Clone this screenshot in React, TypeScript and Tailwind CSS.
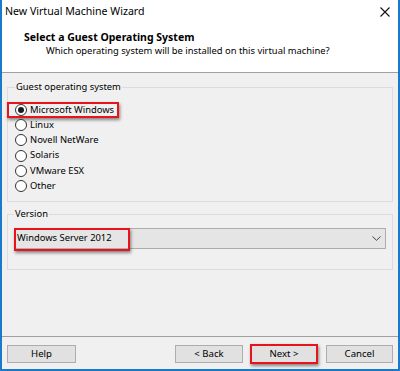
const osOptions = ['Microsoft Windows', 'Linux', 'Novell NetWare', 'Solaris', 'VMware ESX', 'Other'];

function Radio({ checked }: { checked: boolean }) {
    return (
        <span className="w-[12px] h-[12px] rounded-full border border-[#333333] bg-white flex items-center justify-center shrink-0">
            {checked && <span className="w-[6px] h-[6px] rounded-full bg-[#1a1a1a]"></span>}
        </span>
    );
}

function Highlight({ className }: { className: string }) {
    return (
        <span
            className={
                'absolute border-2 border-[#e8141c] shadow-[1px_2px_3px_rgba(0,0,0,0.45)] pointer-events-none ' +
                className
            }
        ></span>
    );
}

export default function App() {
    return (
        <div className="w-[400px] h-[371px] bg-[#f0f0f0] border-x-2 border-b-2 border-[#1979ca] flex flex-col font-['Noto_Sans',sans-serif] text-[9.4px] text-black overflow-hidden">
            {/* header */}
            <div className="h-[73px] bg-white border-b border-[#a0a0a0] shrink-0">
                <div className="h-[24px] flex items-center justify-between pl-[3px] pr-[8px]">
                    <span className="text-[10.6px]">New Virtual Machine Wizard</span>
                    <svg width="10" height="10" viewBox="0 0 10 10">
                        <path d="M0.5 0.5L9.5 9.5M9.5 0.5L0.5 9.5" stroke="#111" strokeWidth="1.1" />
                    </svg>
                </div>
                <div className="pl-[22px] pt-[6px] font-bold text-[10.5px] leading-[14px]">Select a Guest Operating System</div>
                <div className="pl-[44px] leading-[13px]">Which operating system will be installed on this virtual machine?</div>
            </div>

            <div className="flex-1 flex flex-col px-[5px]">
                <fieldset className="mt-[7px] h-[122px] border border-[#dcdcdc] px-[7px]">
                    <legend className="px-[1px] leading-[14px]">Guest operating system</legend>
                    <div className="pt-[8px] flex flex-col">
                        {osOptions.map((name, i) => (
                            <div key={name} className="relative h-[15.3px] flex items-center gap-[3px]">
                                <Radio checked={i === 0} />
                                <span>{name}</span>
                                {i === 0 && <Highlight className="-left-[8px] -top-[0.5px] w-[112px] h-[16px]" />}
                            </div>
                        ))}
                    </div>
                </fieldset>

                <fieldset className="mt-[5px] h-[63px] border border-[#dcdcdc] px-[6px]">
                    <legend className="px-[1px] leading-[14px]">Version</legend>
                    <div className="pt-[7px]">
                        <div className="relative h-[21px] bg-[#e5e5e5] border border-[#adadad] flex items-center justify-between pl-[2px] pr-[4px]">
                            <span>Windows Server 2012</span>
                            <svg width="9" height="5" viewBox="0 0 9 5">
                                <path d="M0.5 0.5L4.5 4.3L8.5 0.5" fill="none" stroke="#444" strokeWidth="1" />
                            </svg>
                            <Highlight className="-left-[1px] -top-[1px] w-[116px] h-[23px]" />
                        </div>
                    </div>
                </fieldset>

                <div className="flex-1"></div>
            </div>

            <div className="h-[33px] shrink-0 border-t border-[#a0a0a0] flex items-center px-[5px] pt-[2px]">
                <button className="w-[69px] h-[18px] bg-[#e1e1e1] border border-[#adadad] text-[9.6px] leading-none">Help</button>
                <div className="flex-1"></div>
                <button className="w-[68px] h-[18px] bg-[#e1e1e1] border border-[#adadad] text-[9.6px] leading-none">&lt; Back</button>
                <button className="ml-[7px] w-[68px] h-[20px] bg-[#e1e1e1] border-2 border-[#e8141c] shadow-[1px_2px_3px_rgba(0,0,0,0.45)] text-[9.6px] leading-none">Next &gt;</button>
                <button className="ml-[8px] w-[67px] h-[18px] bg-[#e1e1e1] border border-[#adadad] text-[9.6px] leading-none">Cancel</button>
            </div>
        </div>
    );
}
